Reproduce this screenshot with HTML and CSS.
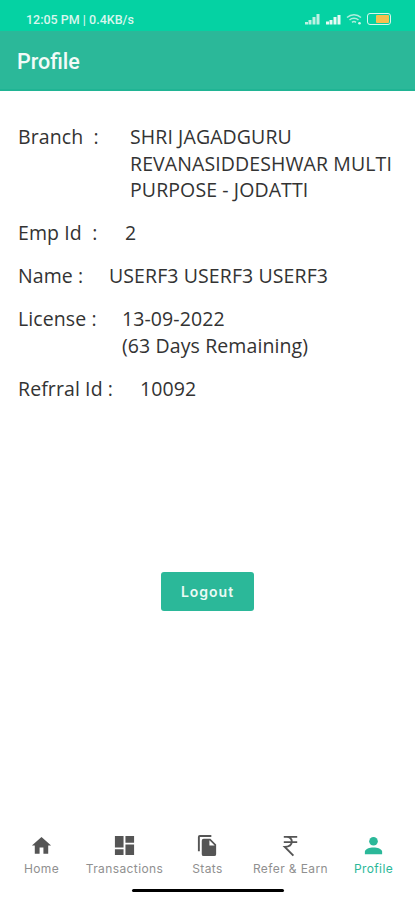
FILE: index.html
```html
<!doctype html>
<html lang="en">
<head>
	<meta charset="UTF-8">
	<title>Profile</title>
	<link rel="stylesheet" href="styles.css">
</head>
<body>
	<div class="page">
		<div class="status">
			<span class="status-text">12:05 PM | 0.4KB/s</span>
			<div class="status-icons">
				<svg width="16" height="11" viewBox="0 0 16 11"><path d="M1 10.500h3V8H1zM4.500 10.500h3V6h-3zM8.500 10.500h3V3h-3zM12.500 10.500h3V0h-3z" fill="#bdf1e3"/></svg>
				<svg width="16" height="11" viewBox="0 0 16 11"><path d="M1 10.500h3V7.500H1zM4.500 10.500h3V6h-3zM8.500 10.500h3V3h-3zM12.500 10.500h3V1h-3z" fill="#e6fbf5"/></svg>
				<svg width="16" height="12" viewBox="0 0 16 12"><path d="M1 4.500C5 .8 11 .8 15 4.500M3.500 7C6 4.800 10 4.800 12.500 7M6 9.300C7.200 8.300 8.800 8.300 10 9.300" fill="none" stroke="#aeeedd" stroke-width="1.500"/><circle cx="13.500" cy="10.300" r="1.300" fill="#d8f7ee"/></svg>
				<div class="battery"><span class="battery-fill"></span></div>
			</div>
		</div>
		<header class="appbar">Profile</header>

		<main class="details">
			<div class="row">
				<span class="label label-branch">Branch&nbsp; :</span>
				<span class="value">SHRI JAGADGURU REVANASIDDESHWAR MULTI PURPOSE - JODATTI</span>
			</div>
			<div class="row">
				<span class="label label-emp">Emp Id&nbsp; :</span>
				<span class="value">2</span>
			</div>
			<div class="row">
				<span class="label label-name">Name :</span>
				<span class="value">USERF3 USERF3 USERF3</span>
			</div>
			<div class="row">
				<span class="label label-license">License :</span>
				<span class="value">13-09-2022<br>(63 Days Remaining)</span>
			</div>
			<div class="row">
				<span class="label label-ref">Refrral Id :</span>
				<span class="value">10092</span>
			</div>
		</main>

		<div class="logout-wrap">
			<button class="logout">Logout</button>
		</div>

		<nav class="nav">
			<div class="nav-item">
				<svg class="nav-icon" viewBox="0 0 24 24"><path d="M10 20.500v-6.500h4v6.500h5v-8.500h3L12 3 2 12h3v8.500z" fill="#555"/></svg>
				<span>Home</span>
			</div>
			<div class="nav-item">
				<svg class="nav-icon" viewBox="0 0 24 24"><path d="M2 2h9v12H2zM13 2h9v7h-9zM2 16h9v6H2zM13 11h9v11h-9z" fill="#555"/></svg>
				<span>Transactions</span>
			</div>
			<div class="nav-item">
				<svg class="nav-icon" viewBox="0 0 24 24"><path d="M16 1H4a2 2 0 0 0-2 2v15h2V3h12z" fill="#555"/><path d="M15 5H8a2 2 0 0 0-2 2v14a2 2 0 0 0 2 2h11a2 2 0 0 0 2-2V11zM14 12V6.500l5.500 5.500z" fill="#555"/></svg>
				<span>Stats</span>
			</div>
			<div class="nav-item">
				<svg class="nav-icon" viewBox="0 0 24 24"><path d="M5 3h14M5 8.500h14M8 3c7 0 8 10-2 10.500l9 9" fill="none" stroke="#555" stroke-width="2"/></svg>
				<span>Refer &amp; Earn</span>
			</div>
			<div class="nav-item nav-item-on">
				<svg class="nav-icon" viewBox="0 0 24 24"><circle cx="12" cy="7.500" r="4.500" fill="#2bb899"/><path d="M3 21v-2.500C3 15.500 8 14 12 14s9 1.500 9 4.500V21z" fill="#2bb899"/></svg>
				<span>Profile</span>
			</div>
		</nav>
		<div class="home-bar"></div>
	</div>
</body>
</html>
```

FILE: styles.css
```css
body{margin:0;background:#fff;}

.page{display:flex;flex-direction:column;width:415px;height:900px;overflow:hidden;font-family:"Open Sans",sans-serif;}

.status{display:flex;align-items:center;justify-content:space-between;height:31px;padding:7px 24px 0 26px;box-sizing:border-box;background:#05d2a3;}
.status-text{font-family:Roboto,sans-serif;font-size:12.500px;font-weight:500;color:#d8f7ee;}
.status-icons{display:flex;align-items:center;gap:5px;}
.battery{width:24px;height:12px;padding:1px;box-sizing:border-box;border:1px solid #d8f7ee;border-radius:3px;}
.battery-fill{display:block;width:13px;height:8px;margin-left:7px;background:#f6c04e;border-radius:1px;}

.appbar{height:60px;padding-left:17px;box-sizing:border-box;border-bottom:2px solid #20b494;background:#2bb899;color:#f2fbf8;font-family:Roboto,sans-serif;font-size:21.500px;font-weight:500;line-height:61px;}

.details{padding:33px 18px 0;color:#333;font-size:19.500px;letter-spacing:.1px;line-height:26.500px;}
.row{display:flex;margin-bottom:16.500px;}
.label{flex:none;white-space:nowrap;}
.value{flex:1;}
.label-branch{width:112px;}
.label-emp{width:107px;}
.label-name{width:91px;}
.label-license{width:104px;}
.label-ref{width:122px;}

.logout-wrap{display:flex;justify-content:center;margin-top:153px;}
.logout{width:93px;height:39px;border:0;border-radius:3px;background:#2bb899;color:#eafaf5;font-family:Inter,sans-serif;font-size:14px;font-weight:600;letter-spacing:1px;}

.nav{display:grid;grid-template-columns:repeat(5,83px);margin-top:auto;}
.nav-item{display:flex;flex-direction:column;align-items:center;gap:4px;color:#909090;font-family:Inter,sans-serif;font-size:12px;letter-spacing:.4px;line-height:15px;white-space:nowrap;}
.nav-icon{width:23px;height:23px;}
.nav-item-on{color:#2bb899;}

.home-bar{width:152px;height:3px;margin:13px auto 8px;background:#000;border-radius:2px;}
```
